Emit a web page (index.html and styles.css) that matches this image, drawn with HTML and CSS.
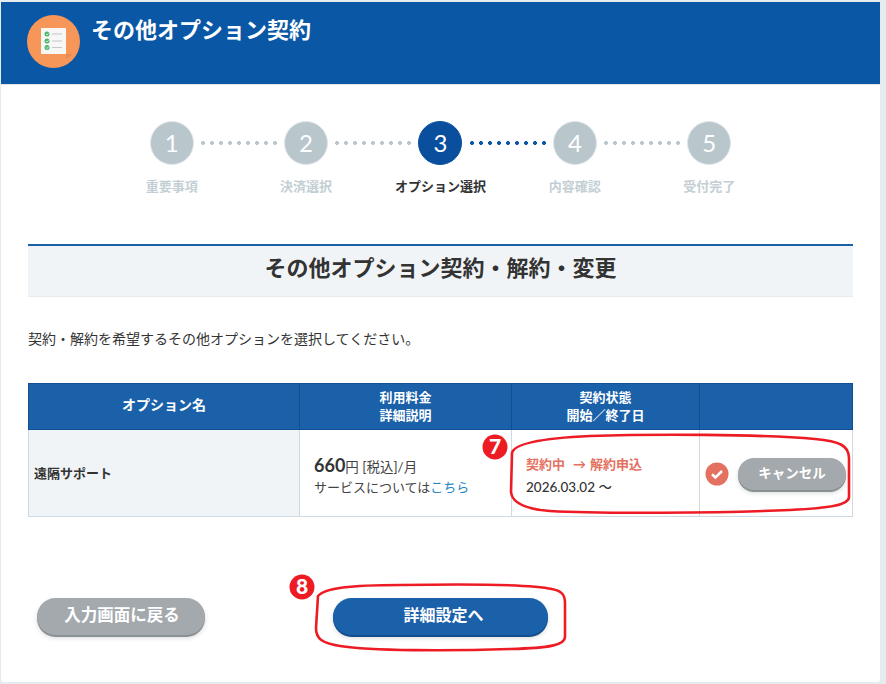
FILE: index.html
```html
<!DOCTYPE html>
<html lang="ja">
<head>
<meta charset="utf-8">
<title>その他オプション契約</title>
<link rel="stylesheet" href="styles.css">
</head>
<body>
<main class="card">
  <header class="head">
    <span class="head-icon">
      <svg viewBox="0 0 53 53" width="53" height="53">
        <circle cx="26.5" cy="26.5" r="26.5" fill="#f79659"/>
        <path d="M39 39 L46 39 L39 44Z" fill="#e98a50"/>
        <rect x="14" y="13" width="25" height="26" fill="#f7f7f5"/>
        <circle cx="20" cy="19" r="2.5" fill="#4fb36f"/>
        <circle cx="20" cy="26" r="2.5" fill="#4fb36f"/>
        <circle cx="20" cy="32.5" r="2.5" fill="#4fb36f"/>
        <path d="M19 19l1 1 1.5-1.8M19 26l1 1 1.5-1.8M19 32.5l1 1 1.5-1.8" stroke="#fff" stroke-width=".7" fill="none"/>
        <path d="M25 19h10M25 26h10M25 32.5h10" stroke="#c4c8c8" stroke-width="1.2"/>
      </svg>
    </span>
    <h1 class="head-title">その他オプション契約</h1>
  </header>

  <ol class="steps">
    <li class="step"><span class="step-num">1</span><span class="step-label">重要事項</span></li>
    <li class="step"><span class="step-num">2</span><span class="step-label">決済選択</span></li>
    <li class="step step-current"><span class="step-num">3</span><span class="step-label">オプション選択</span></li>
    <li class="step step-next"><span class="step-num">4</span><span class="step-label">内容確認</span></li>
    <li class="step"><span class="step-num">5</span><span class="step-label">受付完了</span></li>
  </ol>

  <section class="content">
    <h2 class="section-title">その他オプション契約・解約・変更</h2>
    <p class="lead">契約・解約を希望するその他オプションを選択してください。</p>

    <table class="options">
      <colgroup>
        <col class="col-name"><col class="col-fee"><col class="col-status"><col>
      </colgroup>
      <thead>
        <tr>
          <th class="th-large">オプション名</th>
          <th>利用料金<br>詳細説明</th>
          <th>契約状態<br>開始／終了日</th>
          <th></th>
        </tr>
      </thead>
      <tbody>
        <tr>
          <td class="cell-name">遠隔サポート</td>
          <td class="cell-fee">
            <div><span class="price">660</span><span class="price-unit">円 [税込]/月</span></div>
            <div>サービスについては<a class="link" href="#">こちら</a></div>
          </td>
          <td class="cell-status">
            <div class="status-text">契約中<span class="status-arrow">→</span>解約申込</div>
            <div class="status-date">2026.03.02 〜</div>
          </td>
          <td class="cell-action">
            <div class="action">
              <svg class="check" viewBox="0 0 24 24" width="24" height="24">
                <circle cx="12" cy="12" r="11.5" fill="#e4705f"/>
                <path d="M7 12.3l3.4 3.2L17 9" stroke="#fff" stroke-width="2.6" fill="none"/>
              </svg>
              <button class="btn btn-gray btn-small" type="button">キャンセル</button>
            </div>
          </td>
        </tr>
      </tbody>
    </table>

    <div class="actions">
      <button class="btn btn-gray btn-back" type="button">入力画面に戻る</button>
      <button class="btn btn-blue btn-next" type="button">詳細設定へ</button>
    </div>
  </section>
</main>

<svg class="marks" viewBox="0 0 886 684" width="886" height="684">
  <path class="mark-line" d="M512 453C514 443 545 438 590 436C650 434 760 434 815 439C840 441 849 446 849 458L849 497C849 505 830 508 790 510C720 513 600 514 550 511C525 509 512 503 511 492Z"/>
  <path class="mark-line" d="M318 596C325 588 350 585 400 585C460 584 530 584 552 589C562 591 565 595 565 603L565 637C565 645 550 648 510 649C450 651 370 651 340 646C322 643 316 639 316 628Z"/>
  <circle class="mark-dot" cx="495" cy="447" r="12.5"/>
  <text class="mark-num" x="495" y="454">7</text>
  <circle class="mark-dot" cx="302" cy="587" r="12.5"/>
  <text class="mark-num" x="302" y="594">8</text>
</svg>
</body>
</html>
```
FILE: styles.css
```css
* { box-sizing: border-box; }
html, body { margin: 0; padding: 0; }
body {
  width: 886px;
  height: 684px;
  overflow: hidden;
  background: #e6ebf0;
  padding: 2px 6px 2px 1px;
  position: relative;
  font-family: Lato, "Noto Sans CJK JP", sans-serif;
  color: #333;
}
.card {
  background: #fff;
  height: 680px;
  border-radius: 0 0 3px 3px;
}
.head {
  height: 83px;
  background: #0a57a6;
  border-bottom: 1px solid #dfe6ea;
  display: flex;
  align-items: flex-start;
  padding: 13px 0 0 26px;
  gap: 11px;
}
.head-icon { width: 53px; height: 53px; display: block; }
.head-icon svg { display: block; }
.head-title {
  margin: 0;
  color: #fff;
  font-size: 22px;
  font-weight: 700;
  line-height: 30px;
}
.steps {
  list-style: none;
  margin: 0;
  padding: 36px 0 0 103.5px;
  display: flex;
}
.step {
  width: 134.4px;
  display: flex;
  flex-direction: column;
  align-items: center;
  position: relative;
}
.step + .step::before {
  content: "";
  position: absolute;
  left: -38px;
  top: 20px;
  width: 78px;
  height: 4px;
  background: radial-gradient(circle at 2px 2px, #b9c6cc 1.8px, transparent 2.2px) 0 0 / 9px 4px repeat-x;
}
.step.step-next::before {
  background-image: radial-gradient(circle at 2px 2px, #0a57a6 1.8px, transparent 2.2px);
}
.step-num {
  width: 44px;
  height: 44px;
  border-radius: 50%;
  background: #b9c6cc;
  border: 1px solid #dfe6ea;
  color: #fff;
  font-size: 24px;
  font-weight: 400;
  line-height: 42px;
  text-align: center;
}
.step-label {
  margin-top: 11px;
  font-size: 13px;
  font-weight: 700;
  line-height: 20px;
  color: #c3cfd5;
}
.step-current .step-num {
  background: #0a4f9e;
  border-color: #0a4f9e;
}
.step-current .step-label { color: #333; }
.content { padding: 0 27px; margin-top: 48px; }
.section-title {
  margin: 0;
  height: 53px;
  background: #f1f4f6;
  border-top: 2px solid #1a61aa;
  border-bottom: 1px solid #e6ebf0;
  font-size: 22px;
  font-weight: 700;
  line-height: 43px;
  text-align: center;
  color: #333;
}
.lead {
  margin: 32px 0 0;
  font-size: 14px;
  line-height: 20px;
  color: #333;
}
.options {
  margin-top: 34px;
  width: 825px;
  table-layout: fixed;
  border-collapse: collapse;
}
.col-name { width: 271px; }
.col-fee { width: 212px; }
.col-status { width: 188px; }
.options th {
  height: 46px;
  background: #1a61aa;
  border: 1px solid #0f4f92;
  color: #fff;
  font-size: 13px;
  font-weight: 700;
  line-height: 18px;
  padding: 0 0 2px;
  text-align: center;
}
.options th.th-large { font-size: 14px; padding-bottom: 4px; }
.options td {
  height: 87px;
  border: 1px solid #ced9e2;
  padding: 0;
  font-size: 13px;
  line-height: 20px;
  vertical-align: middle;
}
.options .cell-name {
  background: #f1f4f6;
  padding-left: 5px;
  font-weight: 700;
}
.options .cell-fee { padding: 6px 0 0 14px; color: #444; }
.price { font-size: 18px; font-weight: 700; color: #333; }
.price-unit { font-size: 13.5px; }
.link { color: #2585c4; text-decoration: none; }
.options .cell-status { padding: 4px 0 0 14px; }
.status-text { color: #e4705f; font-weight: 700; font-size: 13px; }
.status-arrow { margin: 0 4px 0 8px; }
.status-date { margin-top: 3px; font-size: 13.5px; font-weight: 500; color: #333; }
.action {
  display: flex;
  align-items: center;
  gap: 9px;
  padding-left: 5px;
}
.check { flex: none; margin-top: 1px; }
.btn {
  border: 0;
  border-radius: 20px;
  color: #fff;
  font-family: inherit;
  font-weight: 700;
  padding: 0 0 6px;
  text-align: center;
}
.btn-gray { background: #a3a9ad; box-shadow: 0 2px 0 #8a9195, 0 3px 5px rgba(0,0,0,.15); }
.btn-blue { background: #1a61aa; box-shadow: 0 2px 0 #134d8b, 0 3px 5px rgba(0,0,0,.15); }
.btn-small { width: 108px; height: 32px; font-size: 13.5px; padding-bottom: 4px; margin-top: 1px; }
.actions {
  display: flex;
  align-items: flex-start;
  gap: 128px;
  margin-top: 81px;
  padding-left: 9px;
}
.btn-back { width: 168px; height: 37px; font-size: 16.5px; padding-left: 2px; }
.btn-next { width: 215px; height: 37px; font-size: 16px; padding-left: 6px; }
.marks {
  position: absolute;
  left: 0;
  top: 0;
  pointer-events: none;
}
.mark-line { fill: none; stroke: #ed1c24; stroke-width: 2.6; }
.mark-dot { fill: #ed1c24; }
.mark-num {
  fill: #fff;
  font-family: Lato, sans-serif;
  font-size: 21px;
  font-weight: 900;
  text-anchor: middle;
}
```
